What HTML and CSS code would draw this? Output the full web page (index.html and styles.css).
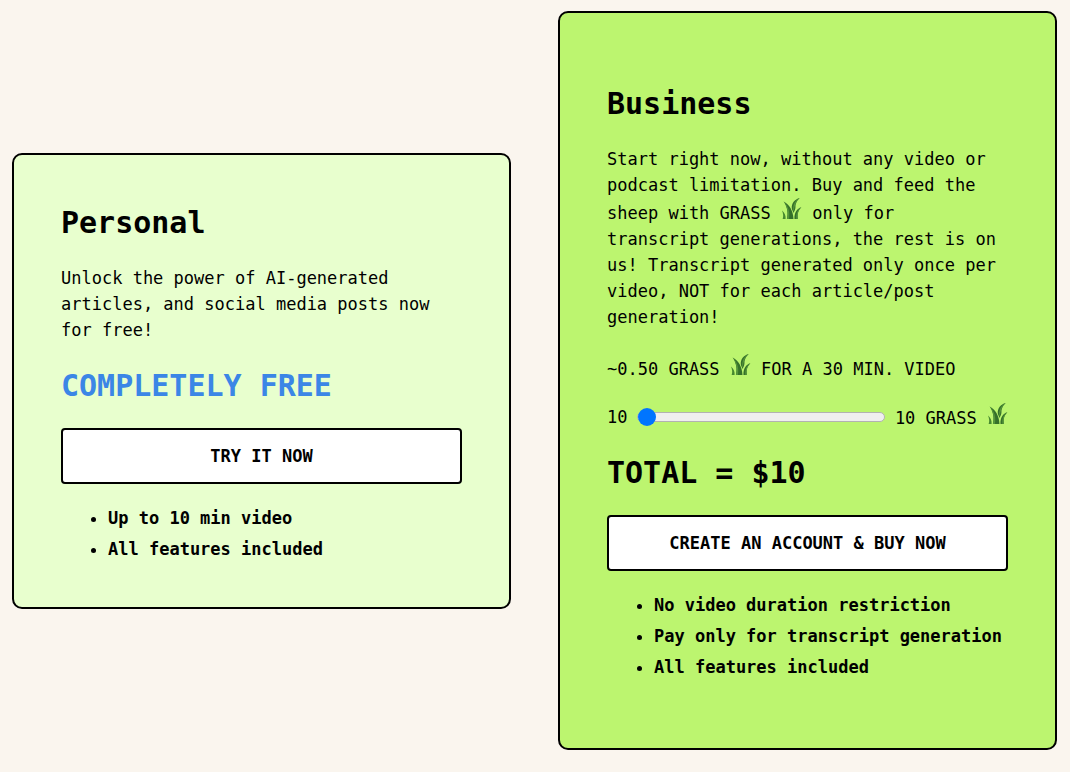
FILE: index.html
```html
<!DOCTYPE html>
<html lang="en">
<head>
  <meta charset="UTF-8" />
  <meta name="viewport" content="width=device-width, initial-scale=1.0" />
  <title>Pricing</title>
  <link rel="stylesheet" href="styles.css">
</head>
<body>
  <!-- Grass icon, reused wherever the currency is named -->
  <svg class="sprite" aria-hidden="true">
    <symbol id="grass" viewBox="0 0 60 64">
      <path fill="#46882f" d="M1 38C9 44 13 53 12 64H3C6 56 5 48 1 38Z" />
      <path fill="#35702a" d="M6 11C23 20 35 38 36 64H16C20 46 18 28 6 11Z" />
      <path fill="#55963a" d="M6 11C18 28 21 46 16 64H22C26 44 21 26 6 11Z" />
      <path fill="#35702a" d="M55 0C40 4 29 16 31 33L36 46C38 40 42 36 42 29C41 18 46 8 55 0Z" />
      <path fill="#55963a" d="M55 0C42 7 35 19 35 34L37 42C38 24 44 9 55 0Z" />
      <path fill="#35702a" d="M60 28C47 32 38 44 39 64H50C47 50 50 37 60 28Z" />
      <path fill="#55963a" d="M60 28C50 33 43 46 45 64H50C47 50 50 37 60 28Z" />
    </symbol>
  </svg>

  <main class="pricing">
    <section class="card personal">
      <h2>Personal</h2>
      <p>Unlock the power of AI-generated articles, and social media posts now for free!</p>
      <h3 class="price free">COMPLETELY FREE</h3>
      <button type="button" class="btn">TRY IT NOW</button>
      <ul class="features">
        <li>Up to 10 min video</li>
        <li>All features included</li>
      </ul>
    </section>

    <section class="card business">
      <h2>Business</h2>
      <p>Start right now, without any video or podcast limitation. Buy and feed the sheep with GRASS <svg class="grass" aria-hidden="true"><use href="#grass" /></svg> only for transcript generations, the rest is on us! Transcript generated only once per video, NOT for each article/post generation!</p>
      <p class="rate">~0.50 GRASS <svg class="grass" aria-hidden="true"><use href="#grass" /></svg> FOR A 30 MIN. VIDEO</p>
      <div class="amount">
        <label for="grassAmount">10</label>
        <input type="range" id="grassAmount" min="10" max="500" value="10">
        <output for="grassAmount">10 GRASS <svg class="grass" aria-hidden="true"><use href="#grass" /></svg></output>
      </div>
      <h3 class="price">TOTAL = $10</h3>
      <button type="button" class="btn">CREATE AN ACCOUNT &amp; BUY NOW</button>
      <ul class="features">
        <li>No video duration restriction</li>
        <li>Pay only for transcript generation</li>
        <li>All features included</li>
      </ul>
    </section>
  </main>
</body>
</html>
```
FILE: styles.css
```css
* {
  box-sizing: border-box;
}
body {
  margin: 0;
  background: #faf5ee;
  color: #000;
  font-family: Consolas, "DejaVu Sans Mono", monospace;
  font-size: 17px;
  line-height: 26px;
}
.sprite {
  display: none;
}
.pricing {
  display: flex;
  align-items: center;
  gap: 47px;
  padding: 11px 13px 22px 12px;
}
.card {
  flex: 1;
  min-width: 0;
  padding: 49px 47px 45px;
  border: 2px solid #000;
  border-radius: 10px;
}
.personal {
  background: #e8ffce;
}
.business {
  background: #bcf56f;
  padding-top: 72px;
  padding-bottom: 68px;
}
h2,
.price {
  margin: 0 0 23px;
  font-size: 30px;
  line-height: 38px;
  font-weight: bold;
}
p {
  margin: 0 0 24px;
  padding-right: 4px;
}
.rate {
  margin-bottom: 21px;
}
.free {
  color: #3b86e6;
}
.grass {
  width: 21px;
  height: 21px;
  vertical-align: baseline;
}
.btn {
  display: block;
  width: 100%;
  padding: 13px;
  background: #fff;
  color: #000;
  border: 2px solid #000;
  border-radius: 4px;
  font: inherit;
  font-weight: bold;
  cursor: pointer;
}
.features {
  margin: 21px 0 0;
  padding-left: 47px;
  font-weight: bold;
}
.features li + li {
  margin-top: 5px;
}
.amount {
  display: flex;
  align-items: center;
  gap: 10px;
  margin-bottom: 23px;
  white-space: nowrap;
}
.amount input {
  -webkit-appearance: none;
  appearance: none;
  flex: 1;
  min-width: 0;
  height: 18px;
  margin: 0;
  background: transparent;
}
.amount input::-webkit-slider-runnable-track {
  height: 10px;
  background: #efefef;
  border: 1px solid #b2b2b2;
  border-radius: 5px;
}
.amount input::-webkit-slider-thumb {
  -webkit-appearance: none;
  width: 18px;
  height: 18px;
  margin-top: -5px;
  background: #0075ff;
  border-radius: 50%;
}
```
